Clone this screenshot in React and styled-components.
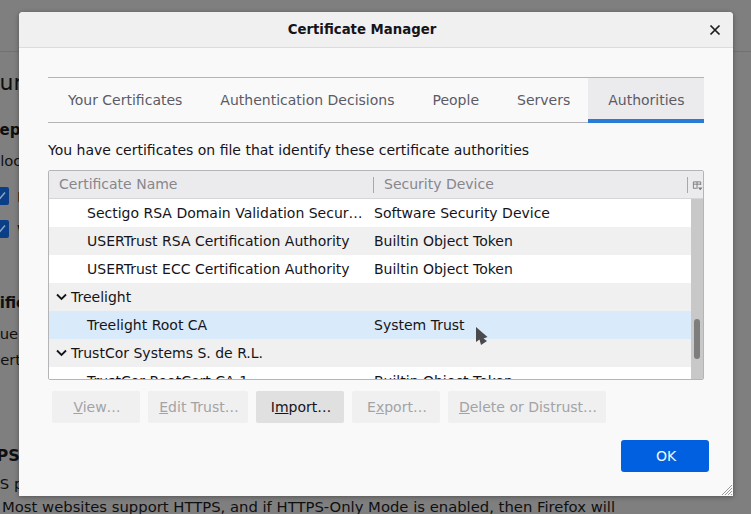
import React from "react";
import styled, { createGlobalStyle } from "styled-components";

const GlobalStyle = createGlobalStyle`
  html, body { margin: 0; height: 100%; overflow: hidden; }
  body { font-family: "DejaVu Sans", sans-serif; background: #7f7f7f; }
`;

const Page = styled.div`
  position: relative;
  width: 751px;
  height: 514px;
  overflow: hidden;
  background: #7f7f7f;
`;

const PageHeader = styled.div`
  height: 51px;
  border-bottom: 1px solid #717171;
`;

const PageLine = styled.div`
  margin-top: ${(p) => p.$top}px;
  margin-left: ${(p) => p.$left}px;
  height: ${(p) => p.$height || 20}px;
  line-height: ${(p) => p.$height || 20}px;
  font-size: ${(p) => p.$size || 14.8}px;
  font-weight: ${(p) => (p.$bold ? 700 : 400)};
  color: #0f0f11;
  white-space: nowrap;
`;

const PageCheckRow = styled.div`
  display: flex;
  align-items: center;
  gap: 8px;
  margin-top: ${(p) => p.$top}px;
  margin-left: -7px;
  height: 20px;
  font-size: 14.8px;
  color: #0f0f11;
  white-space: nowrap;
`;

const PageCheck = styled.span`
  width: 16px;
  height: 18px;
  background: #0a3f88;
  border-radius: 2px;
  display: flex;
  align-items: center;
  justify-content: center;
`;

const Dialog = styled.div`
  position: absolute;
  left: 19px;
  top: 12px;
  width: 714px;
  height: 484px;
  background: #f9f9f9;
  border-radius: 4px 4px 0 0;
  box-shadow: 0 1px 5px rgba(0, 0, 0, 0.35);
  display: flex;
  flex-direction: column;
`;

const TitleBar = styled.div`
  position: relative;
  flex: none;
  height: 35px;
  padding-right: 28px;
  background: #f0f0f0;
  border-bottom: 1px solid #dcdcdc;
  border-radius: 4px 4px 0 0;
  display: flex;
  align-items: center;
  justify-content: center;
  font-size: 13.3px;
  font-weight: 700;
  color: #15141a;
`;

const CloseButton = styled.span`
  position: absolute;
  right: 12px;
  top: 12px;
  display: flex;
`;

const Body = styled.div`
  flex: 1;
  display: flex;
  flex-direction: column;
  padding: 29px 29px 0;
`;

const TabBar = styled.div`
  display: flex;
  height: 44px;
  border-top: 1px solid #b4b4b6;
  border-bottom: 1px solid #b4b4b6;
`;

const Tab = styled.div`
  padding: 2px 19px 0;
  margin-left: ${(p) => (p.$first ? 1 : 0)}px;
  margin-bottom: -1px;
  display: flex;
  align-items: center;
  font-size: 14px;
  white-space: nowrap;
  color: #5b5b66;
  border-bottom: 4px solid transparent;
`;

const ActiveTab = styled(Tab)`
  box-sizing: border-box;
  width: 116px;
  margin-left: -1px;
  padding: 2px 0 0 20px;
  background: #ebebee;
  border-bottom-color: #2a7bd8;
`;

const Description = styled.div`
  margin-top: 18px;
  height: 18px;
  line-height: 18px;
  font-size: 14px;
  color: #15141a;
`;

const Tree = styled.div`
  margin-top: 11px;
  height: 210px;
  border: 1px solid #b5b5b7;
  border-radius: 2px;
  overflow: hidden;
  background: #fff;
  box-sizing: border-box;
  display: flex;
  flex-direction: column;
`;

const TreeHeader = styled.div`
  flex: none;
  height: 28px;
  padding-bottom: 1px;
  box-sizing: border-box;
  background: #ebebee;
  border-bottom: 1px solid #d6d6d8;
  display: grid;
  grid-template-columns: 325px 314px 15px;
  align-items: center;
  font-size: 14px;
  color: #86868c;
`;

const HeaderCell = styled.div`
  padding-left: 10px;
  position: relative;
`;

const Splitter = styled.span`
  position: absolute;
  right: 0;
  top: 1px;
  height: 16px;
  width: 1px;
  background: #a8a8ab;
`;

const PickerSlot = styled.div`
  display: flex;
  padding: 3px 0 0 4px;
`;

const TreeBody = styled.div`
  flex: 1;
  display: flex;
  min-height: 0;
`;

const Rows = styled.div`
  flex: 1;
  overflow: hidden;
`;

const Row = styled.div`
  height: 28px;
  display: grid;
  grid-template-columns: 325px 1fr;
  align-items: center;
  font-size: 14px;
  color: #15141a;
  background: ${(p) => (p.$selected ? "#d9eafb" : p.$alt ? "#f0f0f0" : "#fff")};
`;

const NameCell = styled.div`
  display: flex;
  align-items: center;
  padding-left: ${(p) => (p.$group ? 7 : 38)}px;
  gap: 4px;
  white-space: nowrap;
`;

const ScrollTrack = styled.div`
  flex: none;
  position: relative;
  width: 12px;
  background: #c8c8c8;
`;

const ScrollThumb = styled.div`
  position: absolute;
  left: 3px;
  top: 120px;
  width: 6px;
  height: 40px;
  border-radius: 3px;
  background: #7d7d7d;
`;

const ButtonRow = styled.div`
  display: flex;
  gap: 8px;
  margin-top: 11px;
  padding-left: 4px;
`;

const Button = styled.div`
  height: 32px;
  width: ${(p) => p.$width}px;
  box-sizing: border-box;
  padding-left: 2px;
  display: flex;
  align-items: center;
  justify-content: center;
  border-radius: 2px;
  font-size: 14px;
  background: ${(p) => (p.$enabled ? "#e0e0e0" : "#f0f0f0")};
  color: ${(p) => (p.$enabled ? "#15141a" : "#a3a3a6")};
`;

const Footer = styled.div`
  display: flex;
  justify-content: flex-end;
  margin-top: 17px;
  margin-right: -5px;
`;

const PrimaryButton = styled.div`
  width: 88px;
  height: 32px;
  padding-left: 2px;
  box-sizing: border-box;
  display: flex;
  align-items: center;
  justify-content: center;
  border-radius: 3px;
  font-size: 14px;
  background: #0060df;
  color: #f2f6fd;
`;

const Grip = styled.svg`
  position: absolute;
  right: 0;
  bottom: 0;
`;

const Pointer = styled.svg`
  position: absolute;
  left: 475px;
  top: 326px;
`;

const Twisty = () => (
  <svg width="11" height="8" viewBox="0 0 11 8" fill="none">
    <path d="M1 1.5 L5.5 6 L10 1.5" stroke="#15141a" strokeWidth="1.8" />
  </svg>
);

const ColumnPicker = () => (
  <svg width="12" height="12" viewBox="0 0 12 12" fill="none">
    <path d="M1.5 8.5V1.5H9.5V5M1.5 4H9.5M5.5 1.5V9M1.5 8.5H5" stroke="#77777c" strokeWidth="1" />
    <path d="M6.5 7.5H11.5L9 10.5Z" fill="#77777c" />
  </svg>
);

const CheckMark = () => (
  <svg width="10" height="10" viewBox="0 0 10 10" fill="none">
    <path d="M1 5.5L3.5 8L9 1.5" stroke="#8fa8c8" strokeWidth="1.4" />
  </svg>
);

const tabs = ["Your Certificates", "Authentication Decisions", "People", "Servers"];

const rows = [
  { name: "Sectigo RSA Domain Validation Secur…", device: "Software Security Device" },
  { name: "USERTrust RSA Certification Authority", device: "Builtin Object Token", alt: true },
  { name: "USERTrust ECC Certification Authority", device: "Builtin Object Token" },
  { name: "Treelight", group: true, alt: true },
  { name: "Treelight Root CA", device: "System Trust", selected: true },
  { name: "TrustCor Systems S. de R.L.", group: true, alt: true },
  { name: "TrustCor RootCert CA-1", device: "Builtin Object Token" },
];

const App = () => (
  <Page>
    <GlobalStyle />
    <PageHeader />
    <PageLine $top={19} $left={-40} $size={22} $height={24}>Security</PageLine>
    <PageLine $top={25} $left={-32} $size={15} $bold>Deceptive Content and Dangerous Software Protection</PageLine>
    <PageLine $top={11} $left={-10}>Block dangerous and deceptive content</PageLine>
    <PageCheckRow $top={15}>
      <PageCheck><CheckMark /></PageCheck>
      Block dangerous downloads
    </PageCheckRow>
    <PageCheckRow $top={13}>
      <PageCheck><CheckMark /></PageCheck>
      Warn you about unwanted and uncommon software
    </PageCheckRow>
    <PageLine $top={54} $left={-36} $size={15} $bold>Certificates</PageLine>
    <PageLine $top={11} $left={-12}>Query OCSP responder servers</PageLine>
    <PageLine $top={6} $left={-8}>certificates</PageLine>
    <PageLine $top={76} $left={-39} $size={16} $bold>HTTPS-Only Mode</PageLine>
    <PageLine $top={8} $left={-38}>HTTPS provides a secure, encrypted connection</PageLine>
    <PageLine $top={3} $left={2}>Most websites support HTTPS, and if HTTPS-Only Mode is enabled, then Firefox will</PageLine>

    <Dialog>
      <TitleBar>
        Certificate Manager
        <CloseButton>
          <svg width="12" height="12" viewBox="0 0 12 12" fill="none">
            <path d="M1.5 1.5L10.5 10.5M10.5 1.5L1.5 10.5" stroke="#1b1b20" strokeWidth="1.7" />
          </svg>
        </CloseButton>
      </TitleBar>
      <Body>
        <TabBar>
          {tabs.map((tab, i) => (
            <Tab key={tab} $first={i === 0}>{tab}</Tab>
          ))}
          <ActiveTab>Authorities</ActiveTab>
        </TabBar>
        <Description>You have certificates on file that identify these certificate authorities</Description>
        <Tree>
          <TreeHeader>
            <HeaderCell>Certificate Name<Splitter /></HeaderCell>
            <HeaderCell>Security Device<Splitter /></HeaderCell>
            <PickerSlot><ColumnPicker /></PickerSlot>
          </TreeHeader>
          <TreeBody>
            <Rows>
              {rows.map((row) => (
                <Row key={row.name} $alt={row.alt} $selected={row.selected}>
                  <NameCell $group={row.group}>
                    {row.group && <Twisty />}
                    {row.name}
                  </NameCell>
                  <div>{row.device}</div>
                </Row>
              ))}
            </Rows>
            <ScrollTrack>
              <ScrollThumb />
            </ScrollTrack>
          </TreeBody>
        </Tree>
        <ButtonRow>
          <Button $width={88}><span><u>V</u>iew…</span></Button>
          <Button $width={100}><span><u>E</u>dit Trust…</span></Button>
          <Button $width={88} $enabled><span>I<u>m</u>port…</span></Button>
          <Button $width={88}><span>E<u>x</u>port…</span></Button>
          <Button $width={158}><span><u>D</u>elete or Distrust…</span></Button>
        </ButtonRow>
        <Footer>
          <PrimaryButton>OK</PrimaryButton>
        </Footer>
      </Body>
      <Grip width="12" height="12" viewBox="0 0 12 12" fill="none">
        <path d="M1 11L11 1M4 11L11 4M7 11L11 7M10 11L11 10" stroke="#9a9a9c" strokeWidth="1" />
      </Grip>
    </Dialog>

    <Pointer width="14" height="20" viewBox="0 0 14 20">
      <path d="M1 1V16L4.5 13.5L6 19L12 15L8.5 12.5L12.5 11Z" fill="#4a4a4c" />
    </Pointer>
  </Page>
);

export default App;
